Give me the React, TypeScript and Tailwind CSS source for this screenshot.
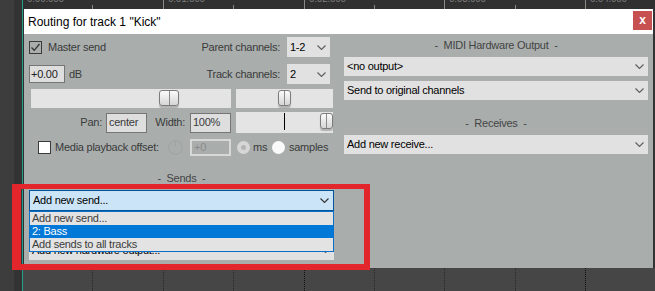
import React from 'react';

const Chevron: React.FC<{ color?: string }> = ({ color = '#5c5c5c' }) => (
  <svg width="9" height="5" viewBox="0 0 9 5" className="shrink-0">
    <path d="M0.5 0.5 L4.5 4.5 L8.5 0.5" fill="none" stroke={color} strokeWidth="1.1" />
  </svg>
);

const Select: React.FC<{ text: string; className?: string; focused?: boolean }> = ({ text, className = '', focused }) => (
  <div
    className={`flex items-center justify-between pl-[3px] pr-[4px] text-black ${
      focused ? 'bg-[#cce4f7] border border-[#005499]' : 'bg-[#e1e1e1]'
    } ${className}`}
  >
    <span className="whitespace-nowrap">{text}</span>
    <Chevron color={focused ? '#333' : '#5c5c5c'} />
  </div>
);

const Thumb: React.FC<{ left: number; w: number }> = ({ left, w }) => (
  <div
    className="absolute top-[1px] h-[16px] rounded-[3px] border border-[#7c7c7c] bg-gradient-to-b from-[#fbfbfb] to-[#d6d6d6] shadow-[0_2px_1px_rgba(0,0,0,0.22)] flex justify-center"
    style={{ left, width: w }}
  >
    <div className="w-[1px] h-full bg-[#8a8a8a]" />
  </div>
);

const ticks = [69, 140, 210, 281, 351, 421, 492, 562];
const majors = [140, 281, 421, 562];
const labels = [
  { x: 4, t: '0:00.000' },
  { x: 145, t: '0:01.000' },
  { x: 286, t: '0:02.000' },
  { x: 426, t: '0:03.000' },
  { x: 567, t: '0:04.000' },
];

export default function App() {
  return (
    <div className="w-[655px] h-[291px] bg-[#464646] flex overflow-hidden relative font-['Liberation_Sans',Arial,sans-serif] text-[11px] tracking-[-0.25px]">
      {/* left track strip */}
      <div className="w-[14px] bg-[#3d3d3d]" />
      <div className="w-[8px] bg-[#333333]" />
      <div className="w-[1px] bg-[#22a08d]" />

      <div className="flex-1 flex flex-col">
        {/* ruler */}
        <div className="h-[9px] bg-[#303030] relative overflow-hidden">
          {ticks.map((x) => (
            <div
              key={x}
              className={`absolute bottom-0 w-[1px] bg-[#8a8a8a] ${majors.includes(x) ? 'h-[9px]' : 'h-[4px]'}`}
              style={{ left: x }}
            />
          ))}
          {labels.map((l) => (
            <span key={l.x} className="absolute top-[-6px] text-[10px] text-[#7d7d7d] leading-none" style={{ left: l.x }}>
              {l.t}
            </span>
          ))}
        </div>

        <div className="h-[259px] flex">
          <div className="w-[1px] bg-[#2e2e2e]" />
          {/* dialog */}
          <div className="w-[629px] flex flex-col bg-[#a9aead]">
            <div className="h-[25px] bg-white flex justify-between pl-[4px] pr-[1px]">
              <span className="self-center text-[12px] tracking-normal text-black">Routing for track 1 "Kick"</span>
              <div className="mt-[2px] w-[19px] h-[19px] bg-[#c75050] flex items-center justify-center text-white font-bold text-[12px] leading-none tracking-normal pb-[2px]">
                x
              </div>
            </div>

            <div className="flex-1 relative flex gap-[10px] px-[5px]">
              {/* left column */}
              <div className="w-[305px] flex flex-col text-[#3a3a3a]">
                <div className="mt-[3px] h-[20px] flex items-center justify-between pr-[4px]">
                  <div className="flex items-center">
                    <div className="w-[13px] h-[13px] border border-[#3a3a3a] flex items-center justify-center">
                      <svg width="11" height="11" viewBox="0 0 11 11">
                        <path d="M1.5 5.5 L4.2 8.3 L9.5 2" fill="none" stroke="#333" strokeWidth="1.3" />
                      </svg>
                    </div>
                    <span className="ml-[6px]">Master send</span>
                  </div>
                  <div className="flex items-center">
                    <span>Parent channels:</span>
                    <Select text="1-2" className="ml-[7px] w-[43px] h-[20px]" />
                  </div>
                </div>

                <div className="mt-[7px] h-[20px] flex items-center justify-between pr-[4px]">
                  <div className="flex items-center">
                    <div className="w-[36px] h-[18px] border border-[#757575] bg-[#dedede] text-[#222] flex items-center pl-[1px]">
                      +0.00
                    </div>
                    <span className="ml-[4px]">dB</span>
                  </div>
                  <div className="flex items-center">
                    <span>Track channels:</span>
                    <Select text="2" className="ml-[7px] w-[43px] h-[20px]" />
                  </div>
                </div>

                <div className="mt-[5px] h-[19px] flex">
                  <div className="ml-[2px] w-[200px] h-full bg-[#e4e4e4] relative">
                    <Thumb left={128} w={20} />
                  </div>
                  <div className="ml-[5px] w-[97px] h-full bg-[#e4e4e4] relative">
                    <Thumb left={42} w={13} />
                  </div>
                </div>

                <div className="mt-[4px] h-[21px] flex items-center">
                  <span className="w-[73px] text-right">Pan:</span>
                  <div className="ml-[4px] w-[41px] h-[20px] border border-[#757575] bg-[#dedede] flex items-center pl-[2px]">
                    center
                  </div>
                  <span className="w-[43px] text-right pr-[5px]">Width:</span>
                  <div className="w-[41px] h-[20px] border border-[#757575] bg-[#dedede] flex items-center pl-[2px]">
                    100%
                  </div>
                  <div className="ml-[5px] w-[97px] h-[21px] bg-[#e4e4e4] relative">
                    <div className="absolute left-[48px] top-[1px] w-[1px] h-[17px] bg-black" />
                    <Thumb left={84} w={13} />
                  </div>
                </div>

                <div className="mt-[6px] h-[17px] flex items-center">
                  <div className="ml-[9px] w-[13px] h-[13px] border border-[#3a3a3a] bg-white" />
                  <span className="ml-[4px] w-[113px] whitespace-nowrap">Media playback offset:</span>
                  <svg width="15" height="15" viewBox="0 0 15 15" className="shrink-0">
                    <circle cx="7.5" cy="7.5" r="6.8" fill="none" stroke="#9ea3a2" strokeWidth="1" />
                    <line x1="7.5" y1="1" x2="7.5" y2="6" stroke="#9ea3a2" strokeWidth="1" />
                  </svg>
                  <div className="ml-[7px] w-[41px] h-[17px] border-2 border-[#d6d8d7] text-[#8c8c8c] flex items-center pl-[2px]">
                    +0
                  </div>
                  <div className="ml-[6px] w-[13px] h-[13px] rounded-full bg-[#d6d6d6] flex items-center justify-center">
                    <div className="w-[5px] h-[5px] rounded-full bg-[#b4b4b4]" />
                  </div>
                  <span className="ml-[3px] w-[19px]">ms</span>
                  <div className="w-[13px] h-[13px] rounded-full bg-[#fafafa]" />
                  <span className="ml-[4px]">samples</span>
                </div>

                <div className="mt-[15px] h-[14px] flex items-center justify-center text-[#444]">- &nbsp;Sends&nbsp; -</div>

                <Select text="Add new send..." focused className="mt-[5px] h-[21px]" />
                <Select text="Add new hardware output..." className="mt-[29px] h-[20px]" />
              </div>

              {/* right column */}
              <div className="w-[304px] flex flex-col">
                <div className="mt-[4px] h-[14px] flex items-center justify-center text-[#444]">- &nbsp;MIDI Hardware Output&nbsp; -</div>
                <Select text="<no output>" className="mt-[5px] h-[19px]" />
                <Select text="Send to original channels" className="mt-[5px] h-[19px]" />
                <div className="mt-[16px] h-[14px] flex items-center justify-center text-[#444]">- &nbsp;Receives&nbsp; -</div>
                <Select text="Add new receive..." className="mt-[5px] h-[19px]" />
              </div>

              {/* open dropdown list */}
              <div className="absolute left-[5px] top-[177px] w-[305px] h-[41px] border border-[#0a6fc9] bg-[#e3e3e3] flex flex-col">
                <div className="h-[13px] leading-[13px] pl-[2px] text-[#3c3c3c]">Add new send...</div>
                <div className="h-[13px] leading-[13px] pl-[2px] bg-[#0078d7] text-white">2: Bass</div>
                <div className="h-[13px] leading-[13px] pl-[2px] text-[#3c3c3c]">Add sends to all tracks</div>
              </div>
            </div>
          </div>
          <div className="flex-1 bg-[#333]" />
        </div>

        {/* bottom arrange area */}
        <div className="flex-1 relative">
          {ticks.map((x) => (
            <div
              key={x}
              className={`absolute top-0 bottom-0 border-l border-dotted ${majors.includes(x) && (x === 281 || x === 562) ? 'border-[#111]' : 'border-[#2a2a2a]'}`}
              style={{ left: x }}
            />
          ))}
        </div>
      </div>

      {/* red highlight annotation */}
      <div className="absolute left-[12px] top-[184px] w-[358px] h-[86px] border-[#e3262b] border-t-[5px] border-r-[6px] border-b-[6px] border-l-[9px]" />
    </div>
  );
}
